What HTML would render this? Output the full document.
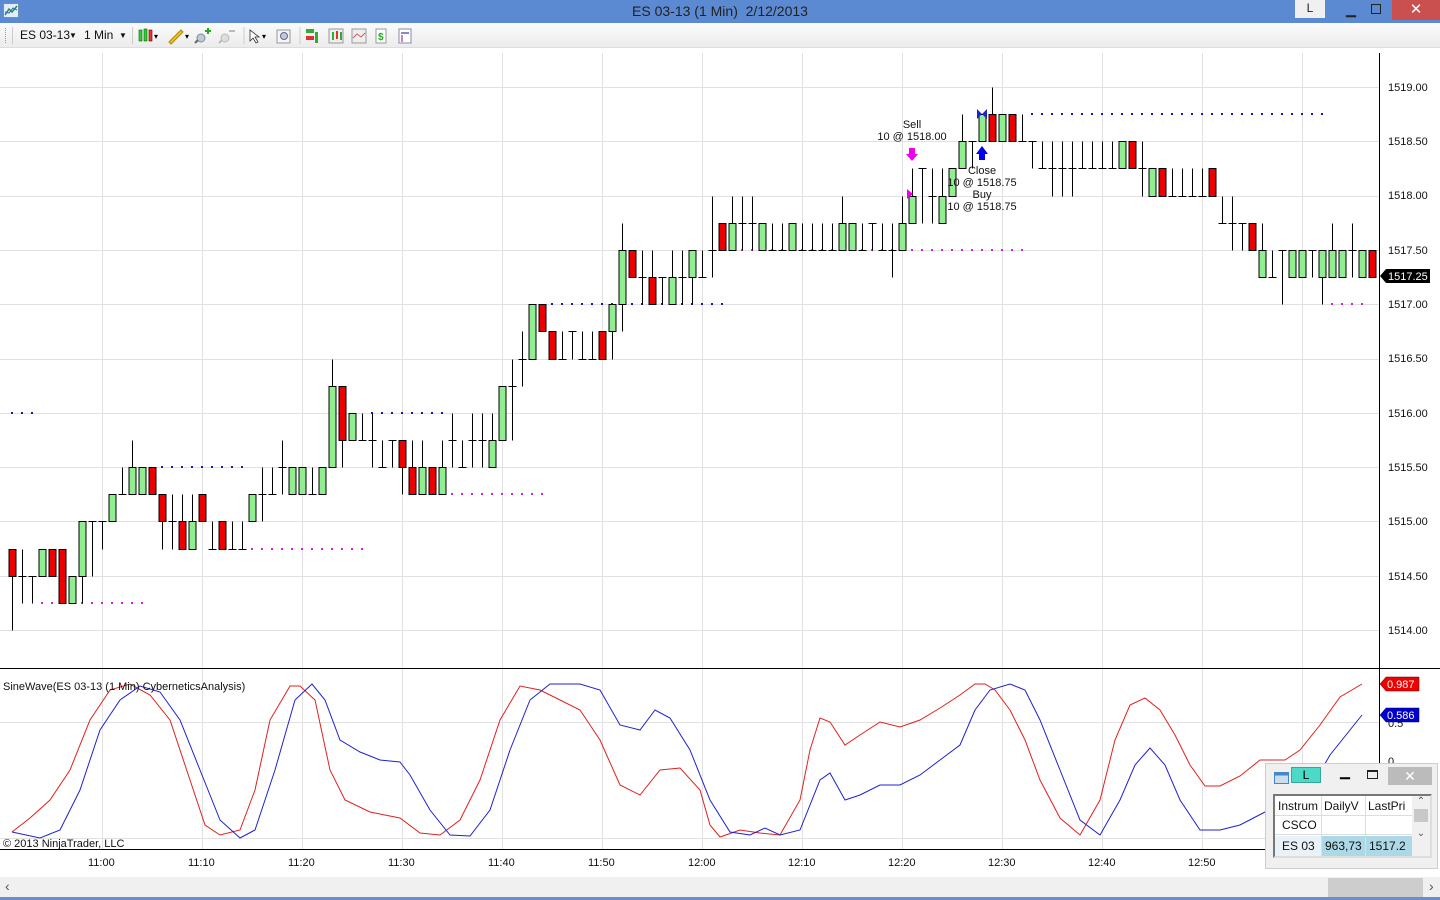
<!DOCTYPE html>
<html><head><meta charset="utf-8">
<style>
*{margin:0;padding:0;box-sizing:border-box}
body{width:1440px;height:900px;overflow:hidden;background:#fff;font-family:"Liberation Sans",sans-serif;position:relative}
#title{position:absolute;left:0;top:0;width:1440px;height:23px;background:#5b8ad2;color:#222;font-size:14px;text-align:center;line-height:23px}
#tb{position:absolute;left:0;top:23px;width:1440px;height:25px;background:linear-gradient(#fbfbfb,#ececec);border-bottom:1px solid #ddd;font-size:12px}
.tbt{position:absolute;top:5px;color:#111;white-space:nowrap}
#chart{position:absolute;left:0;top:0}
#win{position:absolute;left:1265px;top:763px;width:173px;height:106px;background:#f0f0f0;border:1px solid #ccc}
#win span{white-space:nowrap}
#scroll{position:absolute;left:0;top:877px;width:1440px;height:21px;background:#f0f0f0}
</style></head><body>
<div id="title">ES 03-13 (1 Min)&nbsp; 2/12/2013
<div style="position:absolute;left:1295px;top:0;width:30px;height:18px;background:#f0f0f0;font-size:12px;line-height:17px">L</div>
<div style="position:absolute;left:1345px;top:0;width:12px;font-size:13px;line-height:20px">▁</div>
<div style="position:absolute;left:1371px;top:4px;width:10px;height:10px;border:1px solid #222"></div>
<div style="position:absolute;left:1392px;top:0;width:48px;height:20px;background:#c9504f;color:#fff;font-size:15px;line-height:20px">✕</div>
<svg style="position:absolute;left:3px;top:3px" width="16" height="15"><rect x="0.5" y="0.5" width="15" height="14" fill="#dfeefa" stroke="#6a8fb8"/><polyline points="2,12 6,6 9,9 14,3" fill="none" stroke="#2a8f3a" stroke-width="1.5"/><polyline points="2,9 6,10 10,5 14,7" fill="none" stroke="#3366cc"/></svg>
</div>
<div id="tb">
<div style="position:absolute;left:5px;top:5px;width:2px;height:15px;border-left:1px dotted #999"></div>
<div style="position:absolute;left:12px;top:4px;width:1px;height:17px;background:#ccc"></div>
<span class="tbt" style="left:20px">ES 03-13</span><span class="tbt" style="left:69px;font-size:8px;top:8px">▼</span>
<span class="tbt" style="left:84px">1 Min</span><span class="tbt" style="left:119px;font-size:8px;top:8px">▼</span>
<div style="position:absolute;left:132px;top:4px;width:1px;height:17px;background:#ccc"></div>
<svg style="position:absolute;left:137px;top:3px" width="280" height="20">
<rect x="2" y="4" width="3" height="11" fill="#3c3" stroke="#060" stroke-width=".6"/><rect x="7" y="3" width="3" height="12" fill="#3c3" stroke="#060" stroke-width=".6"/><rect x="12" y="4" width="3" height="11" fill="#e33" stroke="#600" stroke-width=".6"/><text x="17" y="13" font-size="8">▾</text>
<path d="M32 16 L44 4 L46 6 L34 18 Z" fill="#f2c12e" stroke="#a80"/><text x="48" y="13" font-size="8">▾</text>
<circle cx="64" cy="12" r="4" fill="#bcd" stroke="#889"/><path d="M58 17l3-3" stroke="#666" stroke-width="2"/><path d="M68 5h6M71 2v6" stroke="#2a2" stroke-width="2"/>
<circle cx="88" cy="12" r="4" fill="#ddd" stroke="#bbb"/><path d="M82 17l3-3" stroke="#bbb" stroke-width="2"/><path d="M92 5h6" stroke="#bbb" stroke-width="2"/>
<line x1="107" y1="1" x2="107" y2="18" stroke="#ccc"/>
<path d="M113 4 L113 15 L116 12 L119 17 L121 16 L118 11 L122 11 Z" fill="#fff" stroke="#333" stroke-width=".8"/><text x="125" y="13" font-size="8">▾</text>
<rect x="140" y="4" width="13" height="13" fill="#f4f4f4" stroke="#999"/><circle cx="147" cy="10" r="3.5" fill="#bcd" stroke="#668"/>
<line x1="163" y1="1" x2="163" y2="18" stroke="#ccc"/>
<rect x="169" y="3" width="8" height="4" fill="#3a3"/><rect x="169" y="10" width="8" height="4" fill="#d33"/><rect x="178" y="6" width="3" height="11" fill="#3a3"/>
<rect x="192" y="3" width="14" height="14" fill="#eee" stroke="#999"/><rect x="195" y="6" width="2" height="8" fill="#3a3"/><rect x="199" y="5" width="2" height="8" fill="#d33"/><rect x="203" y="6" width="2" height="8" fill="#3a3"/>
<rect x="215" y="3" width="14" height="14" fill="#eee" stroke="#999"/><polyline points="216,12 220,8 224,11 228,7" fill="none" stroke="#d55"/>
<rect x="239" y="3" width="10" height="14" fill="#fff" stroke="#999"/><text x="241" y="14" font-size="10" fill="#2a2" font-weight="bold">$</text>
<rect x="262" y="3" width="12" height="14" fill="#fff" stroke="#88a"/><rect x="264" y="6" width="8" height="2" fill="#88c"/><rect x="264" y="9" width="2" height="7" fill="#b8c"/>
</svg>
</div>
<svg id="chart" width="1440" height="900" style="top:0">
<g id="grid" stroke="#e1e1e1" stroke-width="1"></g>
<g id="dots"></g>
<g id="bars" stroke="#000" stroke-width="1"></g>
<g id="osc" fill="none" stroke-width="1"></g>
<line x1="1379.5" y1="53" x2="1379.5" y2="849" stroke="#000"/>
<line x1="0" y1="668.5" x2="1440" y2="668.5" stroke="#000"/>
<line x1="0" y1="849.5" x2="1380" y2="849.5" stroke="#000"/>
<g font-size="11" fill="#111" font-family="Liberation Sans,sans-serif" id="ax">
<text x="1388" y="91">1519.00</text><text x="1388" y="145">1518.50</text><text x="1388" y="199">1518.00</text><text x="1388" y="254">1517.50</text><text x="1388" y="308">1517.00</text><text x="1388" y="362">1516.50</text><text x="1388" y="417">1516.00</text><text x="1388" y="471">1515.50</text><text x="1388" y="525">1515.00</text><text x="1388" y="580">1514.50</text><text x="1388" y="634">1514.00</text>
<text x="1388" y="727">0.5</text><text x="1388" y="765">0</text>
<text x="88" y="866">11:00</text><text x="188" y="866">11:10</text><text x="288" y="866">11:20</text><text x="388" y="866">11:30</text><text x="488" y="866">11:40</text><text x="588" y="866">11:50</text><text x="688" y="866">12:00</text><text x="788" y="866">12:10</text><text x="888" y="866">12:20</text><text x="988" y="866">12:30</text><text x="1088" y="866">12:40</text><text x="1188" y="866">12:50</text>
<text x="3" y="690">SineWave(ES 03-13 (1 Min) CyberneticsAnalysis)</text>
<text x="3" y="847">© 2013 NinjaTrader, LLC</text>
<text x="912" y="128" text-anchor="middle">Sell</text><text x="912" y="140" text-anchor="middle">10 @ 1518.00</text>
<text x="982" y="174" text-anchor="middle">Close</text><text x="982" y="186" text-anchor="middle">10 @ 1518.75</text>
<text x="982" y="198" text-anchor="middle">Buy</text><text x="982" y="210" text-anchor="middle">10 @ 1518.75</text>
</g>
<path d="M1380 276 l6 -7 h44 v14 h-44 z" fill="#000"/><text x="1388" y="280" font-size="11" fill="#fff">1517.25</text>
<path d="M1380 684 l6 -7 h33 v14 h-33 z" fill="#e00" stroke="#600" stroke-width=".5"/><text x="1387" y="688" font-size="11" fill="#fff">0.987</text>
<path d="M1380 715 l6 -7 h33 v14 h-33 z" fill="#00c" stroke="#006" stroke-width=".5"/><text x="1387" y="719" font-size="11" fill="#fff">0.586</text>
<path d="M909 148 h6 v6 h3 l-6 7 l-6 -7 h3 z" fill="#e0e"/>
<path d="M979 160 v-6 h-3 l6 -8 l6 8 h-3 v6 z" fill="#00e"/>
<path d="M977 109 l5 5 l5 -5 v10 l-5 -5 l-5 5 z" fill="#22c"/>
<path d="M907 189 l6 5 l-6 5 z" fill="#e0e"/>
</svg>
<div id="win">
<svg style="position:absolute;left:8px;top:6px" width="16" height="14"><rect x=".5" y="2.5" width="14" height="11" fill="#cde" stroke="#48c"/><rect x=".5" y="2.5" width="14" height="3" fill="#48c"/></svg>
<div style="position:absolute;left:25px;top:3px;width:30px;height:16px;background:#4dd9c8;border:1px solid #3a9;font-size:12px;text-align:center;line-height:14px">L</div>
<div style="position:absolute;left:74px;top:0;font-size:13px">▁</div>
<div style="position:absolute;left:101px;top:6px;width:11px;height:9px;border:1px solid #222;border-top-width:2px"></div>
<div style="position:absolute;left:122px;top:3px;width:44px;height:18px;background:#bbb;color:#fff;text-align:center;font-size:14px;line-height:18px">✕</div>
<div style="position:absolute;left:7px;top:30px;width:159px;height:64px;border:2px solid #777;border-right-color:#ddd;border-bottom-color:#ddd;background:#fff;font-size:12px;color:#111;overflow:hidden">
<div style="position:absolute;left:0;top:0;width:137px;height:20px;line-height:20px;border-bottom:1px solid #ddd"><span style="position:absolute;left:3px">Instrum</span><span style="position:absolute;left:49px">DailyV</span><span style="position:absolute;left:93px">LastPri</span></div>
<div style="position:absolute;left:0;top:20px;width:137px;height:19px;line-height:19px;border-bottom:1px solid #ddd"><span style="position:absolute;left:7px">CSCO</span></div>
<div style="position:absolute;left:0;top:40px;width:137px;height:20px;line-height:20px;background:#add8e6"><div style="position:absolute;left:0;top:0;background:#e8f2f8;width:46px;height:20px;padding-left:7px;white-space:nowrap">ES 03</div><span style="position:absolute;left:50px">963,73</span><span style="position:absolute;left:94px">1517.2</span></div>
<div style="position:absolute;left:46px;top:0;width:1px;height:62px;background:#ddd"></div><div style="position:absolute;left:90px;top:0;width:1px;height:62px;background:#ddd"></div>
<div style="position:absolute;left:137px;top:0;width:18px;height:60px;background:#f0f0f0;font-size:10px;text-align:center;color:#555"><div>⌃</div><div style="background:#c8c8c8;height:13px;margin:2px 2px"></div><div style="margin-top:6px">⌄</div></div>
</div>
</div>
<div id="scroll"><span style="position:absolute;left:5px;top:1px;font-size:14px;color:#555">‹</span><div style="position:absolute;left:1328px;top:1px;width:95px;height:19px;background:#cdcdcd"></div><span style="position:absolute;left:1429px;top:1px;font-size:14px;color:#555">›</span></div>
<div style="position:absolute;left:0;top:897px;width:1440px;height:3px;background:#6a8fc9"></div>
<script>
var NS="http://www.w3.org/2000/svg";
function el(p,t,a){var e=document.createElementNS(NS,t);for(var k in a)e.setAttribute(k,a[k]);document.getElementById(p).appendChild(e);return e;}
function Y(t){return Math.round(630-t*27.15)+.5;}
for(var x=102;x<1379;x+=100)el("grid","line",{x1:x+.5,y1:53,x2:x+.5,y2:849});
for(var i=0;i<=10;i++){var y=Math.round(87+i*54.3)+.5;el("grid","line",{x1:0,y1:y,x2:1379,y2:y});}
el("grid","line",{x1:0,y1:722.5,x2:1379,y2:722.5});el("grid","line",{x1:0,y1:838.5,x2:1379,y2:838.5});
var B=[[3,3,0,2],[2,3,1,2],[2,2,1,2],[2,3,2,3],[3,3,2,2],[3,3,1,1],[1,2,1,2],[2,4,1,4],[4,4,2,4],[4,4,3,4],
[4,5,4,5],[5,6,5,5],[5,7,5,6],[5,6,5,6],[6,6,5,5],[5,5,3,4],[4,5,3,4],[4,5,3,3],[3,5,3,4],[5,5,4,4],
[3,4,3,3],[4,4,3,3],[3,4,3,3],[3,4,3,3],[4,5,4,5],[5,6,4,5],[5,6,5,5],[6,7,5,6],[5,6,5,6],[5,6,5,6],
[5,6,5,5],[5,6,5,6],[6,10,6,9],[9,9,6,7],[7,8,7,8],[7,8,7,7],[7,8,6,7],[6,7,6,6],[7,7,6,7],[7,7,5,6],
[6,7,5,5],[5,7,5,6],[6,6,5,5],[5,7,5,6],[7,8,6,7],[6,7,6,6],[7,8,6,7],[7,8,6,7],[6,8,6,7],[7,9,7,9],
[9,10,7,9],[10,11,9,10],[10,12,10,12],[12,12,11,11],[11,11,10,10],[10,11,10,10],[11,11,10,11],[10,11,10,10],[10,11,10,10],[11,11,10,10],
[11,12,10,12],[12,15,11,14],[14,14,13,13],[13,14,12,13],[13,14,12,12],[13,13,12,13],[12,14,12,13],[13,14,12,13],[13,14,12,14],[13,14,13,13],
[14,16,13,14],[15,15,14,14],[14,16,14,15],[15,16,14,15],[15,16,14,15],[14,15,14,15],[14,15,14,14],[14,15,14,14],[14,15,14,15],[14,15,14,14],
[14,15,14,14],[14,15,14,14],[14,15,14,14],[14,16,14,15],[14,15,14,15],[14,15,14,14],[15,15,14,15],[14,15,14,14],[14,15,13,14],[14,16,14,15],
[15,17,15,16],[17,17,15,17],[16,17,15,16],[15,17,15,16],[16,17,16,17],[17,19,17,18],[18,18,17,18],[18,19,18,19],[19,20,18,18],[18,19,18,19],
[19,19,18,18],[18,19,18,18],[18,18,17,18],[17,18,17,17],[17,18,16,17],[17,18,16,17],[17,18,16,17],[17,18,17,17],[17,18,17,17],[17,18,17,17],
[17,18,17,17],[17,18,17,18],[18,18,17,17],[17,18,16,17],[16,17,16,17],[17,17,16,16],[16,17,16,16],[16,17,16,16],[16,17,16,16],[16,17,16,16],
[17,17,16,16],[15,16,15,15],[15,16,14,15],[15,15,14,15],[15,15,14,14],[13,15,13,14],[13,14,13,13],[14,14,12,14],[13,14,13,14],[13,14,13,14],
[14,14,13,14],[13,14,12,14],[13,15,13,14],[13,14,13,14],[14,15,13,14],[13,14,13,14],[14,14,13,13]];
B.forEach(function(b,i){var x=12+i*10+.5;var o=b[0],h=b[1],l=b[2],c=b[3];
el("bars","line",{x1:x,y1:Y(h),x2:x,y2:Y(l)});
if(o==c)el("bars","line",{x1:x-4,y1:Y(o),x2:x+4,y2:Y(o)});
else el("bars","rect",{x:x-3.5,y:Y(Math.max(o,c)),width:7,height:Y(Math.min(o,c))-Y(Math.max(o,c)),fill:c>o?"#90ee90":"#ee0000"});
});
function dots(y,x0,x1,col){for(var x=x0;x<=x1;x+=10)el("dots","rect",{x:x-1,y:y-1,width:2,height:2,fill:col});}
var bl="#1a1aaa",mg="#d020d8";
dots(413,12,32,bl);dots(467,162,242,bl);dots(413,372,442,bl);dots(304,552,722,bl);dots(114,1032,1322,bl);
dots(603,42,142,mg);dots(549,252,362,mg);dots(494,452,542,mg);dots(250,732,1022,mg);dots(304,1332,1362,mg);
var R="12,832 30,818 50,800 70,770 90,720 110,690 130,684 150,695 170,720 190,780 205,825 220,835 240,830 255,790 270,720 290,686 300,686 315,700 330,770 345,800 370,812 400,818 420,833 440,835 460,820 480,780 500,720 520,686 540,690 560,700 580,710 600,740 620,785 640,795 660,770 680,768 700,790 710,825 720,837 740,830 760,833 780,835 800,800 810,750 820,718 830,722 845,745 860,735 880,722 900,727 920,720 940,708 960,695 975,684 985,684 995,690 1010,710 1025,740 1040,780 1060,818 1080,835 1100,800 1115,740 1130,705 1145,698 1160,710 1175,735 1190,765 1205,786 1220,786 1240,776 1260,760 1285,760 1300,750 1320,725 1340,697 1362,684";
var Bl="12,832 40,838 60,830 80,790 100,730 120,700 140,686 160,692 180,720 200,770 220,820 240,838 255,830 275,770 295,700 312,684 325,700 340,740 360,752 380,760 400,762 410,775 430,810 450,835 470,836 490,810 510,750 530,700 550,684 580,684 600,690 620,725 640,730 655,710 670,718 690,750 710,800 730,832 750,835 765,828 780,835 800,830 820,780 830,773 845,800 860,795 880,785 900,785 920,775 940,760 960,745 975,710 990,690 1010,684 1025,690 1040,720 1060,770 1080,820 1100,835 1120,800 1135,765 1150,748 1165,765 1180,800 1200,830 1220,830 1240,825 1265,812 1290,800 1310,790 1330,755 1362,715";
el("osc","polyline",{points:R,stroke:"#e02020"});el("osc","polyline",{points:Bl,stroke:"#2020d0"});
</script>
</body></html>
